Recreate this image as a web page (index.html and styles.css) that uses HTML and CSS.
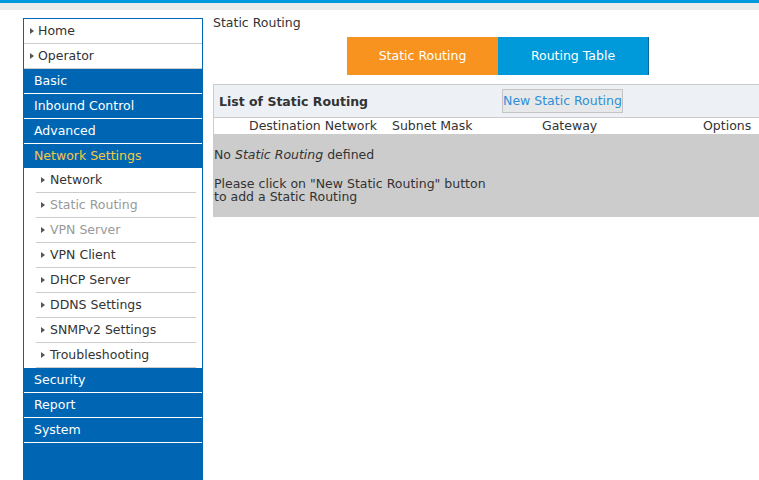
FILE: index.html
```html
<!DOCTYPE html>
<html lang="en">
  <head>
    <meta charset="UTF-8" />
    <title>Static Routing</title>
    <link rel="stylesheet" href="styles.css">
  </head>
  <body>
    <div class="topbar"></div>
    <div class="subbar"></div>
    <div class="wrap">
      <ul class="menu">
        <li class="plain"><span class="arrow"></span>Home</li>
        <li class="plain"><span class="arrow"></span>Operator</li>
        <li class="top">Basic</li>
        <li class="top">Inbound Control</li>
        <li class="top">Advanced</li>
        <li class="top open">Network Settings</li>
        <li class="sub"><span class="arrow"></span>Network</li>
        <li class="sub dim"><span class="arrow"></span>Static Routing</li>
        <li class="sub dim"><span class="arrow"></span>VPN Server</li>
        <li class="sub"><span class="arrow"></span>VPN Client</li>
        <li class="sub"><span class="arrow"></span>DHCP Server</li>
        <li class="sub"><span class="arrow"></span>DDNS Settings</li>
        <li class="sub"><span class="arrow"></span>SNMPv2 Settings</li>
        <li class="sub"><span class="arrow"></span>Troubleshooting</li>
        <li class="top">Security</li>
        <li class="top">Report</li>
        <li class="top">System</li>
      </ul>

      <div class="main">
        <p class="title">Static Routing</p>
        <div class="tabs">
          <p class="tab active">Static Routing</p>
          <p class="tab">Routing Table</p>
        </div>

        <div class="list">
          <div class="list-head">
            <b>List of Static Routing</b>
            <p class="btn">New Static Routing</p>
          </div>
          <div class="cols">
            <span class="c1">Destination Network</span>
            <span class="c2">Subnet Mask</span>
            <span class="c3">Gateway</span>
            <span class="c4">Options</span>
          </div>
          <div class="empty">
            <p>No <i>Static Routing</i> defined</p>
            <p>Please click on "New Static Routing" button<br />to add a Static Routing</p>
          </div>
        </div>
      </div>
    </div>
  </body>
</html>
```

FILE: styles.css
```css
* {
  margin: 0;
  padding: 0;
  list-style: none;
  box-sizing: border-box;
}
body {
  font-family: "DejaVu Sans", Verdana, sans-serif;
  font-size: 12.5px;
  color: #333;
  background: #fff;
  overflow: hidden;
}

.topbar {
  height: 3px;
  background-color: #0099dd;
}
.subbar {
  height: 7px;
  background-color: #e9ebec;
}

.wrap {
  display: flex;
  padding: 8px 0 0 23px;
}

/* left menu */
.menu {
  width: 180px;
  height: 463px;
  flex-shrink: 0;
  border: 1px solid #0066b3;
  border-bottom: 0;
  background-color: #0066b3;
}
.menu li {
  height: 25px;
  line-height: 24px;
  white-space: nowrap;
}
.menu .plain {
  background-color: #fff;
  color: #333;
  padding-left: 6px;
  border-bottom: 1px solid #ccc;
}
.menu .top {
  color: #fff;
  padding-left: 10px;
  border-bottom: 1px solid #fff;
}
.menu .top.open {
  color: #f5c842;
  border-bottom: 0;
  height: 24px;
}
.menu .sub {
  background-color: #fff;
  background-image: linear-gradient(#ccc, #ccc);
  background-size: 160px 1px;
  background-position: 12px 100%;
  background-repeat: no-repeat;
  padding-left: 17px;
}
.menu .sub .arrow {
  margin-right: 5px;
}
.menu .sub.dim {
  color: #999;
}
.arrow {
  display: inline-block;
  width: 0;
  height: 0;
  border-left: 4px solid #555;
  border-top: 3px solid transparent;
  border-bottom: 3px solid transparent;
  margin-right: 4px;
  vertical-align: 1px;
}

/* content */
.main {
  flex: 1;
  margin-left: 10px;
}
.title {
  line-height: 14px;
  margin-top: -2px;
}
.tabs {
  display: flex;
  margin: 7px 0 0 134px;
}
.tab {
  width: 151px;
  height: 38px;
  line-height: 38px;
  text-align: center;
  color: #fff;
  background-color: #0099da;
  border-right: 1px solid #0b6a9c;
}
.tab.active {
  background-color: #f7931e;
  border-right: 0;
}

.list {
  margin-top: 9px;
  border-left: 1px solid #ccc;
}
.list-head {
  display: flex;
  align-items: center;
  height: 34px;
  background-color: #edf1f5;
  border-top: 1px solid #ccc;
  border-bottom: 1px solid #ccc;
  padding-left: 5px;
}
.list-head b {
  width: 283px;
}
.btn {
  width: 121px;
  height: 24px;
  line-height: 22px;
  text-align: center;
  color: #2f8fd8;
  background-color: #e7e8e9;
  border: 1px solid #c4c4c4;
}
.cols {
  display: flex;
  height: 16px;
  line-height: 16px;
  white-space: nowrap;
}
.c1 {
  width: 178px;
  padding-left: 35px;
}
.c2 {
  width: 150px;
}
.c3 {
  width: 161px;
}
.empty {
  background-color: #cccccc;
  padding: 14px 0 14px 0;
  line-height: 13px;
}
.empty p + p {
  margin-top: 16px;
}
```
